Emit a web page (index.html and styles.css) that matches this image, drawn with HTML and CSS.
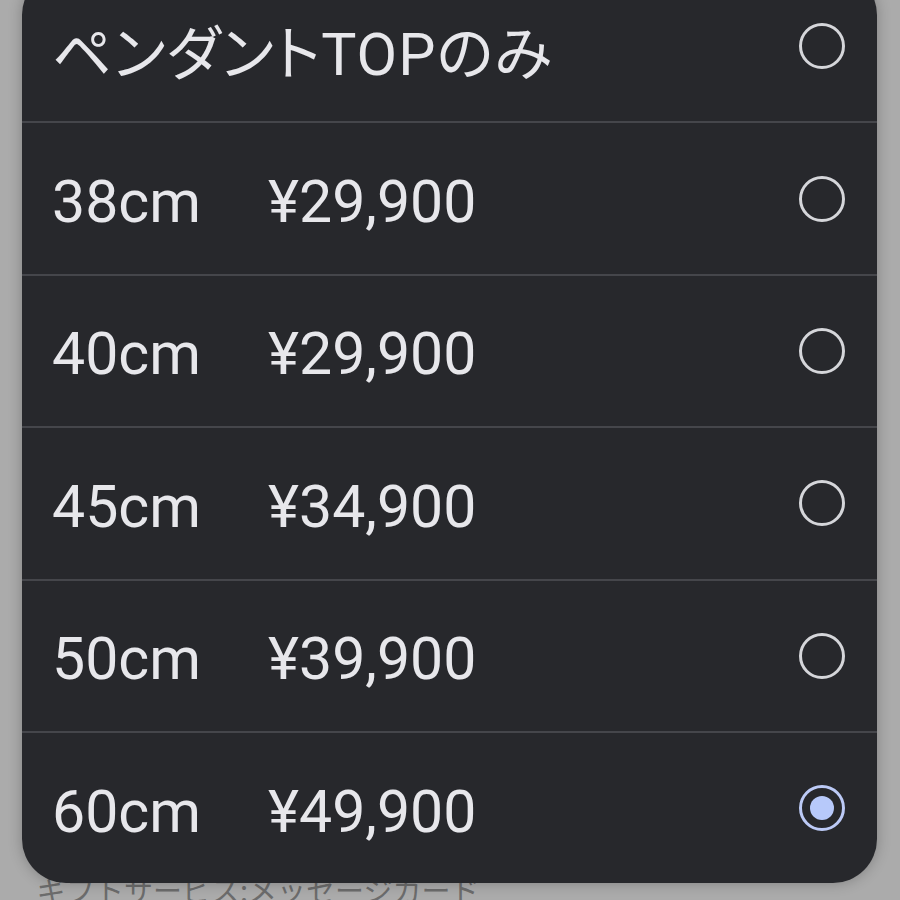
FILE: index.html
```html
<!DOCTYPE html>
<html lang="ja">
<head>
<meta charset="utf-8">
<link rel="stylesheet" href="styles.css">
</head>
<body>
<div class="page">
  <p class="behind">ギフトサービス:メッセージカード</p>
</div>
<div class="dialog">
  <div class="row">
    <span class="label jp">ペンダントTOPのみ</span>
    <span class="radio"></span>
  </div>
  <div class="row">
    <span class="size">38cm</span><span class="price">¥29,900</span>
    <span class="radio"></span>
  </div>
  <div class="row">
    <span class="size">40cm</span><span class="price">¥29,900</span>
    <span class="radio"></span>
  </div>
  <div class="row">
    <span class="size">45cm</span><span class="price">¥34,900</span>
    <span class="radio"></span>
  </div>
  <div class="row">
    <span class="size">50cm</span><span class="price">¥39,900</span>
    <span class="radio"></span>
  </div>
  <div class="row">
    <span class="size">60cm</span><span class="price">¥49,900</span>
    <span class="radio checked"></span>
  </div>
</div>
</body>
</html>
```
FILE: styles.css
```css
html, body {
  margin: 0;
  padding: 0;
  width: 900px;
  height: 900px;
  overflow: hidden;
  background: #ababab;
  font-family: Roboto, "Noto Sans CJK JP", sans-serif;
}
.page {
  padding: 871px 0 0 37px;
}
.behind {
  margin: 0;
  font-family: "Noto Sans CJK JP", sans-serif;
  font-size: 29px;
  line-height: 36px;
  color: #6c6c6c;
  white-space: nowrap;
}
.dialog {
  position: absolute;
  left: 22px;
  top: -29px;
  width: 855px;
  background: #27282c;
  border-radius: 44px;
  box-shadow: 0 0 14px rgba(0, 0, 0, 0.25);
  overflow: hidden;
}
.row {
  display: flex;
  align-items: center;
  height: 150.4px;
  padding: 0 32px 0 30px;
  color: #e7e7eb;
  font-size: 59px;
}
.row + .row {
  border-top: 2px solid #45464b;
}
.label,
.size,
.price {
  padding-top: 6px;
}
.label {
  flex: 1;
  font-feature-settings: "palt";
  letter-spacing: 1px;
}
.size {
  width: 216px;
}
.price {
  flex: 1;
}
.radio {
  width: 46px;
  height: 46px;
  box-sizing: border-box;
  border: 3.5px solid #d5d6da;
  border-radius: 50%;
  display: flex;
  align-items: center;
  justify-content: center;
}
.radio.checked {
  border-color: #bccaf6;
}
.radio.checked::after {
  content: "";
  width: 24px;
  height: 24px;
  border-radius: 50%;
  background: #b7c9fa;
}
```
